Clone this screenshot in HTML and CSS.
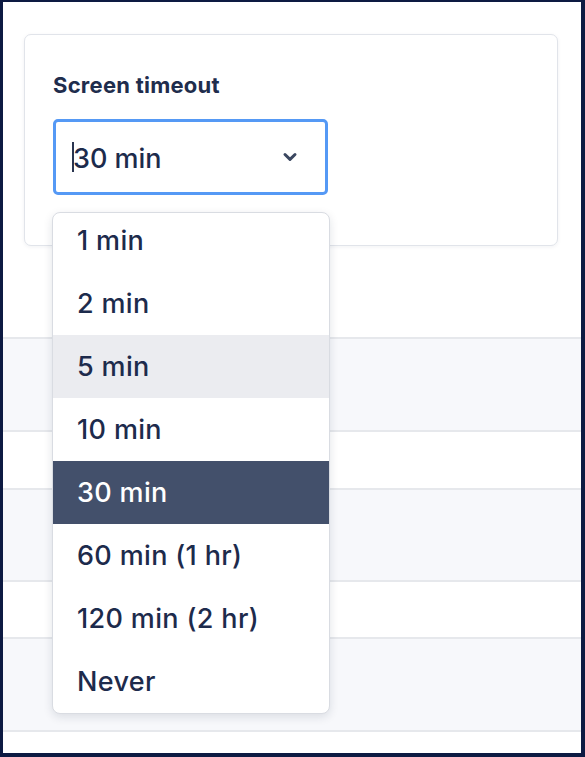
FILE: index.html
```html
<!DOCTYPE html>
<html lang="en">
<head>
<meta charset="utf-8">
<title>Screen timeout</title>
<link rel="stylesheet" href="styles.css">
</head>
<body>
<div class="frame">
  <div class="top">
    <div class="card">
      <div class="label">Screen timeout</div>
      <div class="select">
        <span class="caret"></span>
        <span class="value">30 min</span>
        <svg class="chevron" width="16" height="10" viewBox="0 0 16 10"><path d="M3 2.5 L8 7.3 L13 2.5" fill="none" stroke="#3b4760" stroke-width="3" stroke-linecap="round" stroke-linejoin="round"/></svg>
      </div>
    </div>
  </div>
  <div class="row gray h93"></div>
  <div class="row h58"></div>
  <div class="row gray h92"></div>
  <div class="row h57"></div>
  <div class="row gray h93"></div>
  <div class="row last"></div>

  <ul class="menu">
    <li class="item first">1 min</li>
    <li class="item">2 min</li>
    <li class="item hover">5 min</li>
    <li class="item">10 min</li>
    <li class="item selected">30 min</li>
    <li class="item">60 min (1 hr)</li>
    <li class="item">120 min (2 hr)</li>
    <li class="item">Never</li>
  </ul>
</div>
</body>
</html>
```
FILE: styles.css
```css
html, body {
  margin: 0;
  padding: 0;
  background: #ffffff;
}
body {
  font-family: Inter, "Noto Sans", "Liberation Sans", sans-serif;
  color: #1d2b4c;
}
.frame {
  position: relative;
  width: 585px;
  height: 757px;
  box-sizing: border-box;
  border-style: solid;
  border-color: #0d1a42;
  border-width: 2px 4px 4px 3px;
  background: #ffffff;
  overflow: hidden;
  display: flex;
  flex-direction: column;
}
.top {
  height: 335px;
  flex: none;
  padding: 32px 0 0 21px;
  box-sizing: border-box;
}
.card {
  width: 534px;
  height: 212px;
  box-sizing: border-box;
  border: 1px solid #e1e4ea;
  border-radius: 7px;
  box-shadow: 0 1px 4px rgba(20, 30, 60, 0.06);
  padding: 37px 0 0 28px;
  background: #fff;
}
.label {
  font-size: 22px;
  font-weight: 700;
  line-height: 26px;
  color: #1f2d4d;
  letter-spacing: 0.25px;
}
.select {
  margin-top: 21px;
  width: 275px;
  height: 76px;
  box-sizing: border-box;
  border: 3px solid #5599f5;
  border-radius: 5px;
  display: flex;
  align-items: center;
  padding-left: 16px;
  padding-right: 27px;
  position: relative;
}
.caret {
  width: 2px;
  height: 30px;
  background: #2a3550;
  flex: none;
}
.value {
  font-size: 27px;
  font-weight: 500;
  color: #1d2b4c;
  flex: 1;
  margin-left: -1px;
  padding-top: 2px;
}
.chevron {
  flex: none;
}
.row {
  flex: none;
  border-top: 2px solid #e6e8ec;
  box-sizing: border-box;
  background: #ffffff;
}
.row.gray { background: #f7f8fb; }
.h93 { height: 93px; }
.h58 { height: 58px; }
.h92 { height: 92px; }
.h57 { height: 57px; }
.row.last { flex: 1; }

.menu {
  position: absolute;
  left: 49px;
  top: 210px;
  width: 278px;
  height: 502px;
  margin: 0;
  padding: 0;
  list-style: none;
  box-sizing: border-box;
  background: #ffffff;
  border: 1px solid #d9dce2;
  border-radius: 8px;
  box-shadow: 0 3px 10px rgba(20, 30, 60, 0.12);
  overflow: hidden;
}
.item {
  height: 63px;
  display: flex;
  align-items: center;
  padding-left: 24px;
  font-size: 27px;
  font-weight: 500;
  letter-spacing: 0.35px;
  color: #1d2b4c;
}
.item.first {
  height: 59px;
  align-items: flex-start;
  padding-top: 11px;
  box-sizing: border-box;
}
.item.hover { background: #ebecf0; }
.item.selected { background: #43506b; color: #ffffff; }
```
